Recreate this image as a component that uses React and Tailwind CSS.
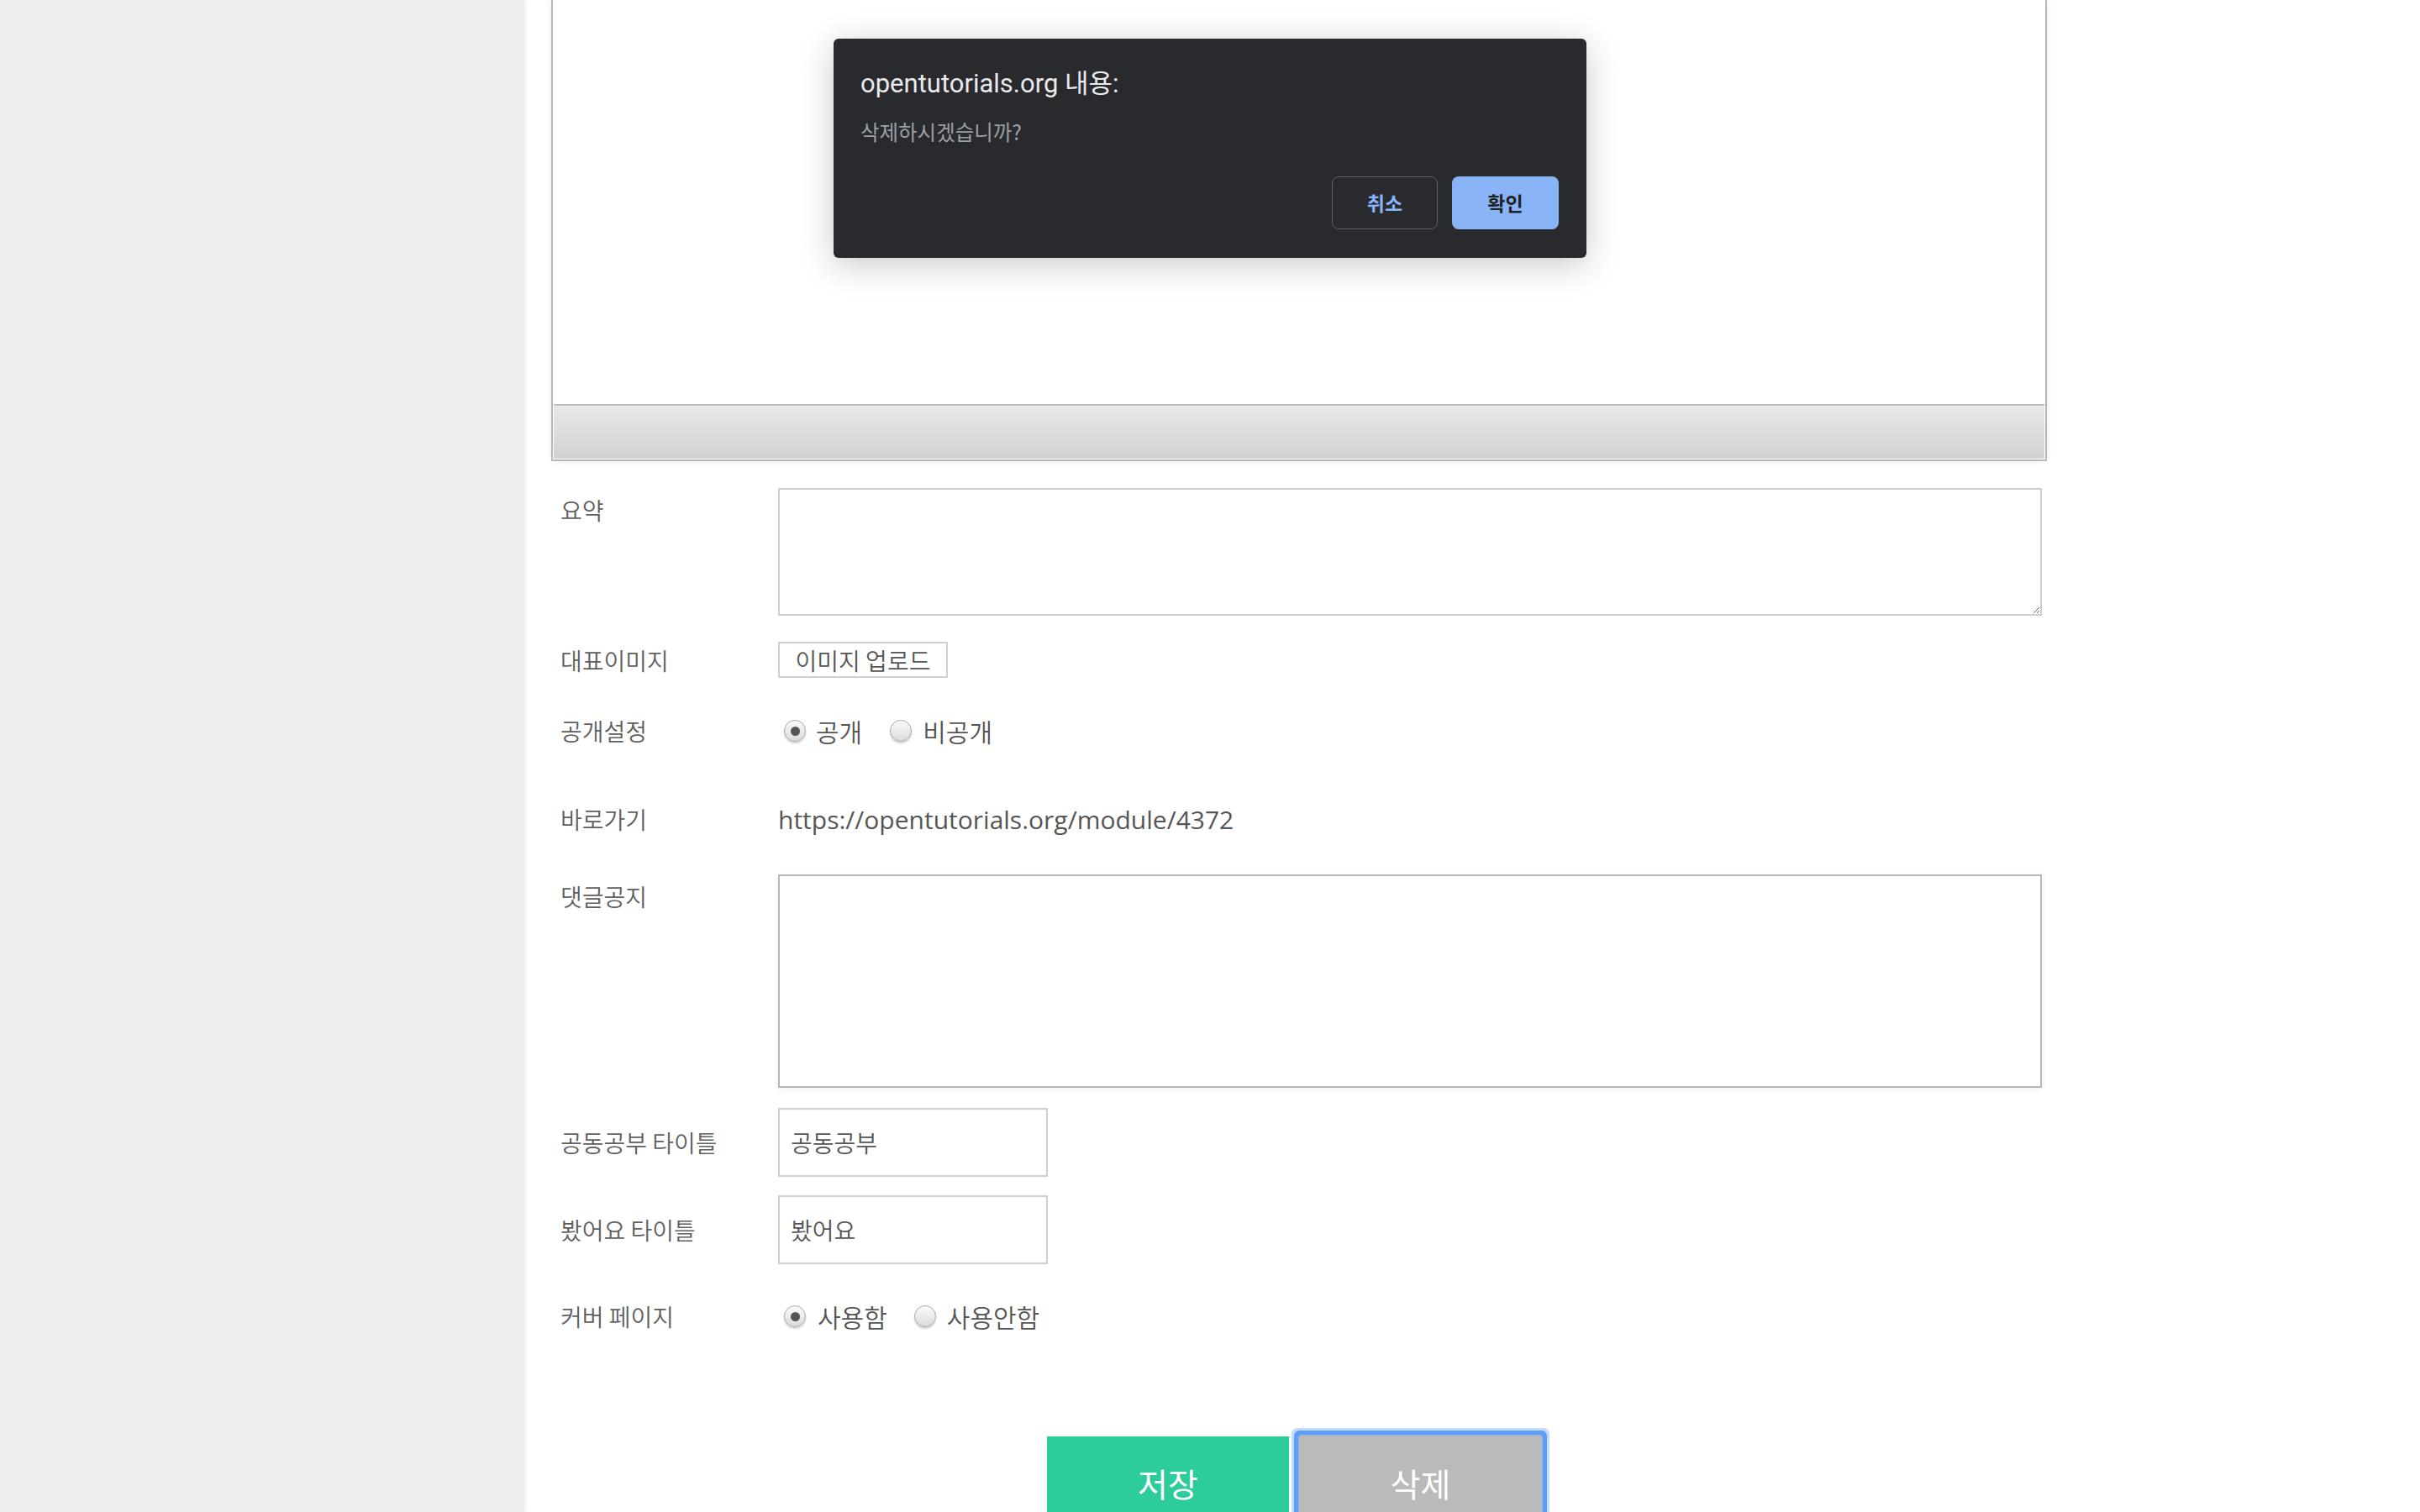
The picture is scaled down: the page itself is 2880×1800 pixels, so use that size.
import React from "react";

const KR = "font-['Noto_Sans_CJK_KR',sans-serif]";

const Radio = ({ checked }) => (
  <span className="flex size-[26px] shrink-0 items-center justify-center rounded-full border-[1.5px] border-[#a9a9a9] bg-[linear-gradient(#fbfbfb,#dadada)] shadow-[0_2px_2px_rgba(0,0,0,0.18)]">
    {checked && <span className="size-[11px] rounded-full bg-[#555]" />}
  </span>
);

const Label = ({ children, top }) => (
  <div
    className={`w-[270px] shrink-0 pl-[11px] text-[28px] font-[350] leading-[40px] text-[#5f5f5f] ${KR} ${
      top ? "self-start pt-[6px]" : ""
    }`}
  >
    {children}
  </div>
);

const App = () => {
  return (
    <div className="relative flex h-[1800px] w-[2880px] overflow-hidden bg-white">
      {/* left sidebar */}
      <aside className="w-[624px] shrink-0 bg-[#ededed] shadow-[2px_0_4px_rgba(0,0,0,0.06)]" />

      <main className="flex-1 pl-[32px]">
        {/* editor (scrolled, top cut off) */}
        <div className="w-[1780px] border-x-2 border-b-2 border-[#b8b8b8] bg-white px-px pb-px shadow-[0_0_8px_rgba(0,0,0,0.08)]">
          <div className="h-[481px] bg-white" />
          <div className="h-[2px] bg-[#bdbdbd]" />
          <div className="h-[63px] border-t border-[#ededed] bg-[linear-gradient(#e8e8e8,#d1d2d1)]" />
        </div>

        {/* summary */}
        <div className="mt-[32px] flex">
          <Label top>요약</Label>
          <textarea className="h-[152px] w-[1504px] resize border-2 border-[#cfcfcf] bg-white outline-none" />
        </div>

        {/* thumbnail */}
        <div className="mt-[31px] flex items-center">
          <Label>대표이미지</Label>
          <button
            className={`h-[43px] w-[202px] border-2 border-[#cfcfcf] bg-white text-[28px] font-[350] leading-none text-[#555] ${KR}`}
          >
            이미지 업로드
          </button>
        </div>

        {/* visibility */}
        <div className="mt-[43px] flex h-[40px] items-center">
          <Label>공개설정</Label>
          <div className={`flex items-center text-[30px] font-[350] leading-[40px] text-[#555] ${KR}`}>
            <span className="ml-[7px] flex">
              <Radio checked />
            </span>
            <span className="ml-[12px]">공개</span>
            <span className="ml-[33px] flex">
              <Radio />
            </span>
            <span className="ml-[13px]">비공개</span>
          </div>
        </div>

        {/* shortcut */}
        <div className="mt-[65px] flex h-[40px] items-center">
          <Label>바로가기</Label>
          <span className="font-['Open_Sans',sans-serif] text-[30px] text-[#555]">
            https://opentutorials.org/module/4372
          </span>
        </div>

        {/* comment notice */}
        <div className="mt-[46px] flex">
          <Label top>댓글공지</Label>
          <textarea className="h-[254px] w-[1504px] resize-none border-2 border-[#b8b8b8] bg-white shadow-[0_1px_6px_rgba(0,0,0,0.08)] outline-none" />
        </div>

        {/* titles */}
        <div className="mt-[24px] flex items-center">
          <Label>공동공부 타이틀</Label>
          <input
            defaultValue="공동공부"
            className={`h-[82px] w-[321px] border-2 border-[#cfcfcf] px-[13px] text-[28px] font-[350] text-[#555] outline-none ${KR}`}
          />
        </div>
        <div className="mt-[22px] flex items-center">
          <Label>봤어요 타이틀</Label>
          <input
            defaultValue="봤어요"
            className={`h-[82px] w-[321px] border-2 border-[#cfcfcf] px-[13px] text-[28px] font-[350] text-[#555] outline-none ${KR}`}
          />
        </div>

        {/* cover page */}
        <div className="mt-[42px] flex h-[40px] items-center">
          <Label>커버 페이지</Label>
          <div className={`flex items-center text-[30px] font-[350] leading-[40px] text-[#555] ${KR}`}>
            <span className="ml-[7px] flex">
              <Radio checked />
            </span>
            <span className="ml-[14px]">사용함</span>
            <span className="ml-[32px] flex">
              <Radio />
            </span>
            <span className="ml-[13px]">사용안함</span>
          </div>
        </div>

        {/* actions */}
        <div className={`mt-[123px] flex pl-[590px] text-[39px] text-white ${KR}`}>
          <button className="flex h-[110px] w-[288px] items-center justify-center bg-[#2ccc9c]">
            저장
          </button>
          <button className="ml-[13px] flex h-[110px] w-[287px] items-center justify-center rounded-[2px] bg-[#bababa] shadow-[0_0_0_2px_#a3b6d3,0_0_0_7px_#5e9ef5,0_0_0_10px_#c4dafc]">
            삭제
          </button>
        </div>
      </main>

      {/* confirm dialog */}
      <div className="absolute left-[992px] top-[46px] flex h-[261px] w-[896px] flex-col rounded-[6px] bg-[#292a2d] px-[32px] shadow-[0_8px_40px_rgba(0,0,0,0.22)]">
        <div className="mt-[36px] font-['Roboto','Noto_Sans_CJK_KR',sans-serif] text-[31px] leading-[36px] text-[#e8eaed]">
          opentutorials.org 내용:
        </div>
        <div className={`mt-[24px] text-[24.5px] leading-[30px] text-[#9aa0a6] ${KR}`}>
          삭제하시겠습니까?
        </div>
        <div className={`mt-auto mb-[34px] flex justify-end gap-[17px] text-[23px] font-bold ${KR}`}>
          <button className="h-[63px] w-[126px] rounded-[8px] border border-[#5f6368] text-[#8ab4f8]">
            취소
          </button>
          <button className="mr-px h-[63px] w-[127px] rounded-[8px] bg-[#8ab4f8] text-[#202124]">
            확인
          </button>
        </div>
      </div>
    </div>
  );
};

export default App;
